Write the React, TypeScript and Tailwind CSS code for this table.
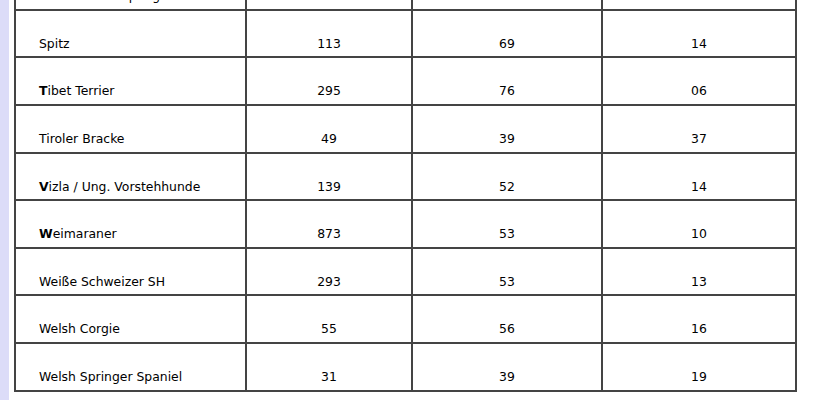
import React from 'react';

type Row = { name: string; bold?: boolean; a: string; b: string; c: string };

const rows: Row[] = [
  { name: "Shetland Sheepdog", a: "264", b: "57", c: "12" },
  { name: "Spitz", a: "113", b: "69", c: "14" },
  { name: "Tibet Terrier", bold: true, a: "295", b: "76", c: "06" },
  { name: "Tiroler Bracke", a: "49", b: "39", c: "37" },
  { name: "Vizla / Ung. Vorstehhunde", bold: true, a: "139", b: "52", c: "14" },
  { name: "Weimaraner", bold: true, a: "873", b: "53", c: "10" },
  { name: "Weiße Schweizer SH", a: "293", b: "53", c: "13" },
  { name: "Welsh Corgie", a: "55", b: "56", c: "16" },
  { name: "Welsh Springer Spaniel", a: "31", b: "39", c: "19" },
];

const cell = "h-[47.6px] border-r-2 border-b-2 border-[#444] align-bottom pb-[4.5px] leading-4";

const App = () => {
  return (
    <div className="flex h-[400px] overflow-hidden bg-white text-[12.4px] text-black" style={{ fontFamily: '"DejaVu Sans", Verdana, sans-serif' }}>
      {/* linke Leiste */}
      <div className="w-[9px] shrink-0 bg-[#dcdcf8]" />
      <div className="pl-[5px]">
        <table className="-mt-[38.8px] w-[783px] border-separate border-spacing-0 border-l-2 border-t-2 border-[#444]">
          <colgroup>
            <col className="w-[231px]" />
            <col className="w-[166px]" />
            <col className="w-[190px]" />
            <col className="w-[194px]" />
          </colgroup>
          <tbody>
            {rows.map(r => (
              <tr key={r.name}>
                <td className={`${cell} pl-[23px] text-left`}>
                  {r.bold ? (
                    <>
                      <b>{r.name[0]}</b>
                      {r.name.slice(1)}
                    </>
                  ) : (
                    r.name
                  )}
                </td>
                <td className={`${cell} text-center`}>{r.a}</td>
                <td className={`${cell} text-center`}>{r.b}</td>
                <td className={`${cell} text-center`}>{r.c}</td>
              </tr>
            ))}
          </tbody>
        </table>
      </div>
    </div>
  );
};

export default App;
